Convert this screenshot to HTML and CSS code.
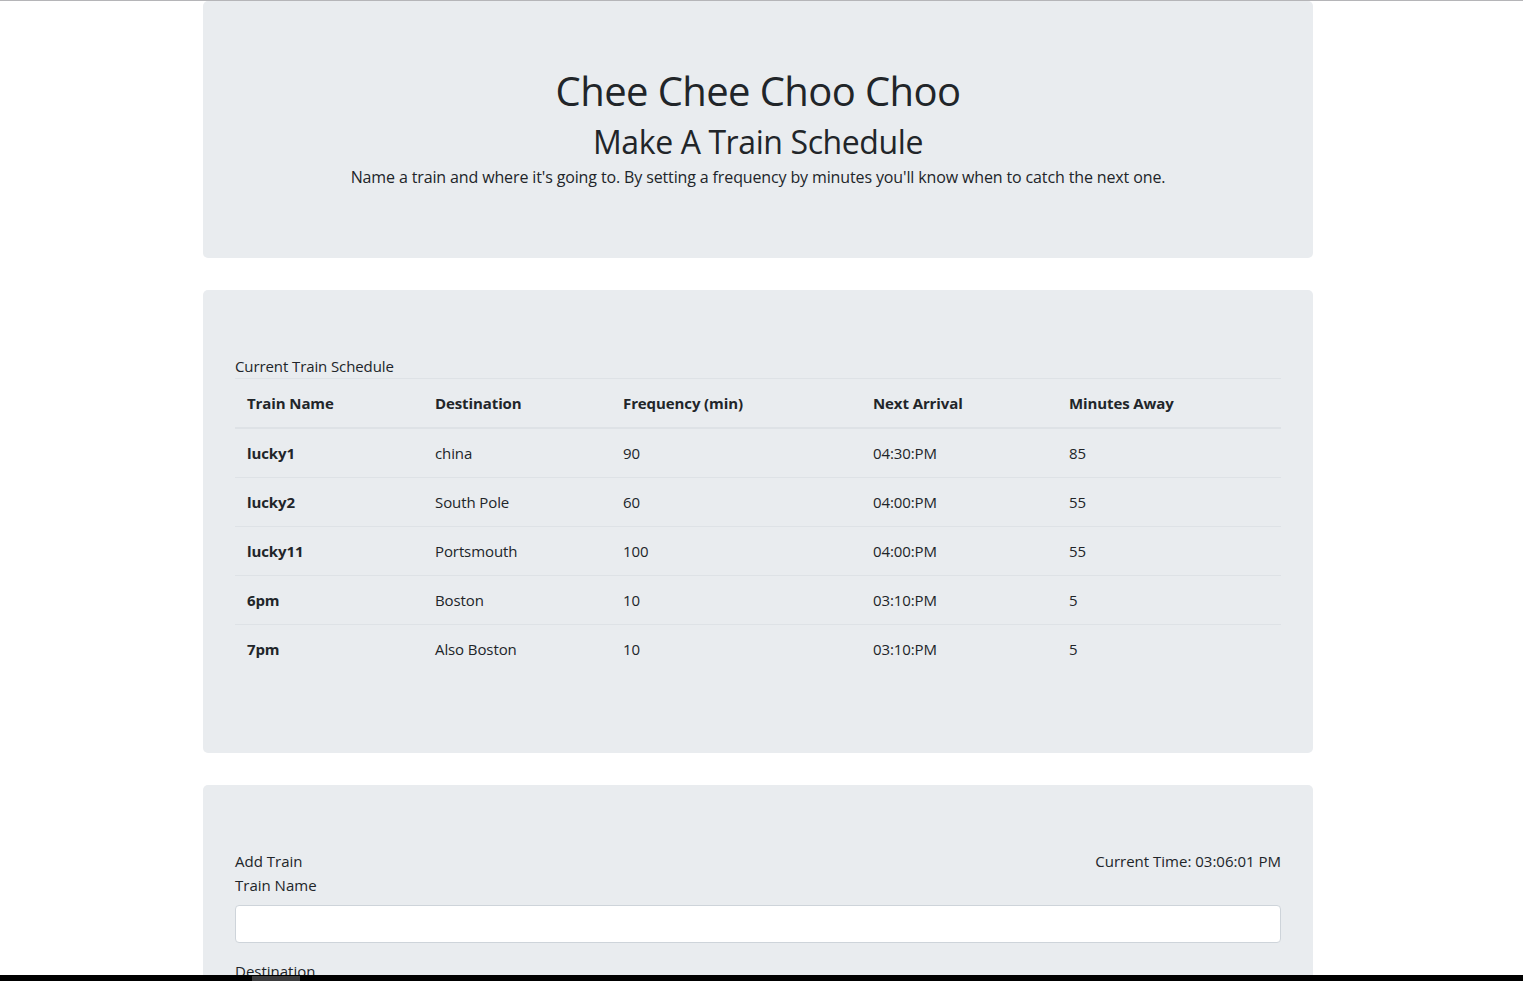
FILE: index.html
```html
<!DOCTYPE html>
<html lang="en">
<head>
<meta charset="utf-8">
<title>Train Schedule</title>
<link rel="stylesheet" href="styles.css">
</head>
<body>
<div class="topline"></div>
<div class="container">
  <header class="jumbotron hero">
    <h1 class="title">Chee Chee Choo Choo</h1>
    <h2 class="subtitle">Make A Train Schedule</h2>
    <p class="lead">Name a train and where it's going to. By setting a frequency by minutes you'll know when to catch the next one.</p>
  </header>

  <section class="jumbotron">
    <div class="section-title">Current Train Schedule</div>
    <table class="table">
      <thead>
        <tr>
          <th class="c1">Train Name</th>
          <th class="c2">Destination</th>
          <th class="c3">Frequency (min)</th>
          <th class="c4">Next Arrival</th>
          <th class="c5">Minutes Away</th>
        </tr>
      </thead>
      <tbody>
        <tr><th>lucky1</th><td>china</td><td>90</td><td>04:30:PM</td><td>85</td></tr>
        <tr><th>lucky2</th><td>South Pole</td><td>60</td><td>04:00:PM</td><td>55</td></tr>
        <tr><th>lucky11</th><td>Portsmouth</td><td>100</td><td>04:00:PM</td><td>55</td></tr>
        <tr><th>6pm</th><td>Boston</td><td>10</td><td>03:10:PM</td><td>5</td></tr>
        <tr><th>7pm</th><td>Also Boston</td><td>10</td><td>03:10:PM</td><td>5</td></tr>
      </tbody>
    </table>
  </section>

  <section class="jumbotron">
    <div class="form-head">
      <span>Add Train</span>
      <span>Current Time: 03:06:01 PM</span>
    </div>
    <div class="form-group">
      <label for="train-name">Train Name</label>
      <input id="train-name" class="form-control" type="text">
    </div>
    <div class="form-group">
      <label for="destination">Destination</label>
      <input id="destination" class="form-control" type="text">
    </div>
    <div class="form-group">
      <label for="first-time">First Train Time (HH:mm - military time)</label>
      <input id="first-time" class="form-control" type="text">
    </div>
  </section>
</div>
<div class="hscroll"><div class="hscroll-thumb"></div></div>
</body>
</html>
```

FILE: styles.css
```css
* { box-sizing: border-box; }

html, body {
  margin: 0;
  padding: 0;
  background: #fff;
}

body {
  font-family: "Open Sans", "Noto Sans", "Liberation Sans", sans-serif;
  font-size: 15px;
  line-height: 24px;
  color: #212529;
}

.topline {
  height: 1px;
  background: #b5b5b8;
}

.container {
  width: 1110px;
  margin: 0 0 0 203px;
}

.jumbotron {
  background: #e9ecef;
  border-radius: 5px;
  padding: 64px 32px;
  margin-bottom: 32px;
}

.hero {
  text-align: center;
  padding-top: 66px;
  padding-bottom: 69px;
}

.title {
  margin: 0 0 8px;
  font-size: 40px;
  font-weight: 500;
  line-height: 48px;
  letter-spacing: -0.6px;
}

.subtitle {
  margin: 0 0 4px;
  font-size: 32px;
  font-weight: 500;
  line-height: 38px;
  letter-spacing: -0.4px;
}

.lead {
  margin: 0;
  font-size: 16px;
  letter-spacing: -0.13px;
}

.section-title {
  letter-spacing: -0.1px;
}

.table {
  width: 100%;
  border-collapse: collapse;
  margin-bottom: 16px;
  letter-spacing: -0.1px;
}

.table th,
.table td {
  padding: 12px;
  line-height: 24px;
  text-align: left;
  vertical-align: top;
  border-top: 1px solid #dee2e6;
}

.table th { font-weight: 700; }

.table thead th {
  border-bottom: 2px solid #dee2e6;
}

.c1 { width: 188px; }
.c2 { width: 188px; }
.c3 { width: 250px; }
.c4 { width: 196px; }
.c5 { width: 224px; }

.form-head {
  display: flex;
  justify-content: space-between;
}

.form-group {
  margin-bottom: 16px;
}

.form-group label {
  display: block;
  margin-bottom: 8px;
}

.form-control {
  display: block;
  width: 100%;
  height: 38px;
  padding: 6px 12px;
  font: inherit;
  color: #495057;
  background: #fff;
  border: 1px solid #ced4da;
  border-radius: 4px;
}

.hscroll {
  position: fixed;
  left: 0;
  right: 0;
  bottom: 0;
  height: 6px;
  background: #000;
}

.hscroll-thumb {
  position: absolute;
  left: 252px;
  top: 1px;
  width: 48px;
  height: 5px;
  background: #3b3b3d;
}
```
